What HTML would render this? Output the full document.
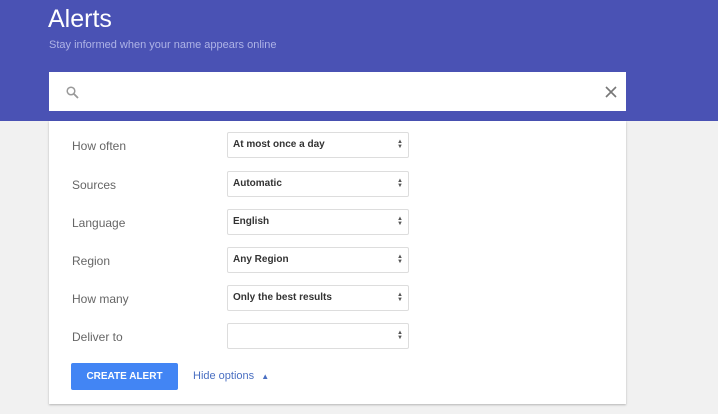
<!DOCTYPE html><html><head><style>
body{margin:0;width:718px;height:414px;background:#f1f1f1;font-family:"Liberation Sans",sans-serif;position:relative;overflow:hidden}
.hd{position:absolute;left:0;top:0;width:718px;height:121px;background:#4a52b4}
h1{position:absolute;left:48px;top:5px;margin:0;font-weight:normal;font-size:25px;color:#fff}
.sub{position:absolute;left:49px;top:39px;font-size:11px;color:#aeb3e6}
.sb{position:absolute;left:49px;top:72px;width:577px;height:39px;background:#fff}
.card{position:absolute;left:49px;top:121px;width:577px;height:283px;background:#fff;box-shadow:0 1px 2px rgba(0,0,0,.25)}
.lb{position:absolute;left:72px;font-size:12px;color:#666}
.sel{position:absolute;left:227px;width:180px;height:24px;border:1px solid #ddd;border-radius:2px;background:#fff;font-size:10px;font-weight:bold;color:#333}
.sel span{position:absolute;left:5px;top:6px;line-height:12px;display:block}
.sel i{position:absolute;right:5px;top:7px;font-style:normal;font-size:6px;line-height:5px;color:#555}
.btn{position:absolute;left:71px;top:363px;width:107px;height:27px;background:#4285f4;border-radius:2px;color:#fff;font-size:10px;font-weight:bold;text-align:center;line-height:27px}
.ho{position:absolute;left:193px;top:370px;font-size:11px;color:#4a6fc2}
</style></head><body>
<div class="hd"></div>
<h1>Alerts</h1>
<div class="sub">Stay informed when your name appears online</div>
<div class="card"></div>
<div class="sb">
<svg style="position:absolute;left:17px;top:14px" width="13" height="13" viewBox="0 0 13 13"><circle cx="5" cy="5" r="3.8" fill="none" stroke="#999" stroke-width="1.5"/><path d="M8 8l4 4" stroke="#999" stroke-width="1.8"/></svg>
<svg style="position:absolute;left:556px;top:14px" width="12" height="12" viewBox="0 0 12 12"><path d="M1 1l10 10M11 1L1 11" stroke="#777" stroke-width="1.6"/></svg>
</div>
<div class="lb" style="top:139px">How often</div><div class="sel" style="top:132px"><span>At most once a day</span><i>▲<br>▼</i></div>
<div class="lb" style="top:178px">Sources</div><div class="sel" style="top:171px"><span>Automatic</span><i>▲<br>▼</i></div>
<div class="lb" style="top:216px">Language</div><div class="sel" style="top:209px"><span>English</span><i>▲<br>▼</i></div>
<div class="lb" style="top:254px">Region</div><div class="sel" style="top:247px"><span>Any Region</span><i>▲<br>▼</i></div>
<div class="lb" style="top:292px">How many</div><div class="sel" style="top:285px"><span>Only the best results</span><i>▲<br>▼</i></div>
<div class="lb" style="top:330px">Deliver to</div><div class="sel" style="top:323px"><span></span><i>▲<br>▼</i></div>
<div class="btn">CREATE ALERT</div>
<div class="ho">Hide options <span style="font-size:8px;margin-left:4px">▲</span></div>
</body></html>
